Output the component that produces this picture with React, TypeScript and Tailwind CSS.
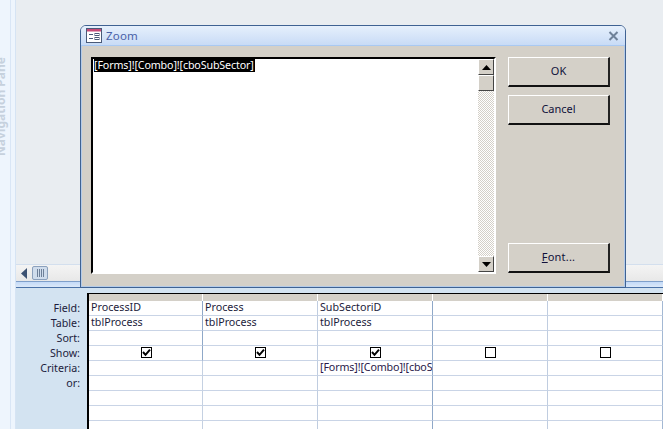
import React from "react";

const labels = ["Field:", "Table:", "Sort:", "Show:", "Criteria:", "or:"];

function Check({ on }: { on: boolean }) {
  return (
    <span className="flex h-[11px] w-[11px] items-center justify-center border border-black bg-white">
      {on && (
        <svg width="9" height="9" viewBox="0 0 9 9">
          <path d="M1 4 L3.5 6.8 L8 1.6" fill="none" stroke="#000" strokeWidth="2" />
        </svg>
      )}
    </span>
  );
}

const cols = [
  { field: "ProcessID", table: "tblProcess", show: true, crit: "", top: "border-r-[#8fa8c8]", low: "border-r-[#c5d1e2]" },
  { field: "Process", table: "tblProcess", show: true, crit: "", top: "border-r-[#c0cde0]", low: "border-r-[#c0cde0]" },
  { field: "SubSectoriD", table: "tblProcess", show: true, crit: "[Forms]![Combo]![cboSubSector]", top: "border-r-[#8fa8c8]", low: "border-r-[#8fa8c8]" },
  { field: "", table: "", show: false, crit: "", top: "border-r-[#c0cde0]", low: "border-r-[#c0cde0]" },
  { field: "", table: "", show: false, crit: "", top: "border-r-[#a3b8d3]", low: "border-r-[#a3b8d3]" },
];

function Cell({ children, center, sep }: { children?: React.ReactNode; center?: boolean; sep: string }) {
  return (
    <div className={`flex h-[15px] items-center overflow-hidden whitespace-nowrap border-b border-r border-b-[#c9d4e6] pb-px pl-[2px] pr-[1px] ${sep} ${center ? "justify-center" : ""}`}>
      {children}
    </div>
  );
}

function Btn({ children }: { children: React.ReactNode }) {
  return (
    <button className="flex h-[30px] w-[102px] items-center justify-center border-b-2 border-l border-r-2 border-t border-t-white border-l-white border-r-[#222] border-b-[#111] bg-[#d4d0c8] text-[11px] text-[#10103a]">
      {children}
    </button>
  );
}

function Arrow({ dir }: { dir: "up" | "down" }) {
  return (
    <div className="flex h-[16px] w-[16px] shrink-0 items-center justify-center border border-t-white border-l-white border-r-[#444] border-b-[#444] bg-[#d4d0c8]">
      <svg width="9" height="5" viewBox="0 0 9 5">
        <path d={dir === "up" ? "M4.5 0 L9 5 L0 5 Z" : "M0 0 L9 0 L4.5 5 Z"} fill="#000" />
      </svg>
    </div>
  );
}

export default function App() {
  return (
    <div className="h-[432px] w-[665px] overflow-hidden bg-white">
      <div
        className="relative flex h-[429px] w-[663px] overflow-hidden text-[10.7px] text-[#1c1c3c]"
        style={{ fontFamily: '"Noto Sans", "Liberation Sans", sans-serif' }}
      >
        {/* Navigation pane */}
        <div className="relative h-full w-[16px] shrink-0 overflow-hidden border-r border-[#d6e4f4] bg-[#eef5fd]">
          <div className="h-full w-[11px] border-r border-[#d9e6f6]" />
          <span
            className="absolute left-[-8px] top-[49px] flex h-[107px] rotate-180 items-center justify-start whitespace-nowrap text-[12px] font-bold text-[#c6d1dd] [writing-mode:vertical-rl]"
          >
            Navigation Pane
          </span>
        </div>

        <div className="flex min-w-0 flex-1 flex-col">
          {/* Upper design area */}
          <div className="h-[264px] shrink-0 bg-[#e9edf1]" />
          {/* Horizontal scroll bar */}
          <div className="flex h-[17px] shrink-0 items-center border-t border-[#d3dfee] bg-gradient-to-b from-[#f4f4f4] to-[#e8e8e8]">
            <svg width="8" height="11" viewBox="0 0 8 11" className="ml-[5px]">
              <path d="M6 0 L6 11 L0 5.5 Z" fill="#3c5273" />
            </svg>
            <div className="ml-[3px] flex h-[14px] w-[16px] items-center justify-center gap-px rounded-[2px] border border-[#8ba0bc] bg-[#cfdcec]">
              <i className="h-[8px] w-px bg-[#6d7f98]" />
              <i className="h-[8px] w-px bg-[#6d7f98]" />
              <i className="h-[8px] w-px bg-[#6d7f98]" />
              <i className="h-[8px] w-px bg-[#6d7f98]" />
            </div>
          </div>
          {/* Splitter */}
          <div className="h-[7px] shrink-0 border-b border-t border-b-[#4a72a8] border-t-[#7f9fca] bg-gradient-to-b from-[#c3daf8] to-[#dbe8f8]" />

          {/* Query grid */}
          <div className="flex min-h-0 flex-1 bg-[#d3e3f1] pt-[5px]">
            <div className="w-[71px] shrink-0 pt-[8px] text-right leading-none">
              {labels.map((l) => (
                <div key={l} className="flex h-[15px] items-center justify-end pb-px pr-[7px]">{l}</div>
              ))}
            </div>
            <div className="flex min-w-0 flex-1 overflow-hidden border-l-2 border-t border-black bg-white">
              {cols.map((c, i) => (
                <div key={i} className={`flex shrink-0 flex-col ${i === 0 ? "w-[114px]" : "w-[115px]"}`}>
                  <div className="h-[7px] shrink-0 border-r border-r-white bg-[#d4d0c8]" />
                  <Cell sep={c.top}>{c.field}</Cell>
                  <Cell sep={c.top}>{c.table}</Cell>
                  <Cell sep={c.top} />
                  <Cell sep={c.top} center><Check on={c.show} /></Cell>
                  <Cell sep={c.low}><span className="tracking-[-0.13px] text-[#2a1a4a]">{c.crit}</span></Cell>
                  <Cell sep={c.low} />
                  <Cell sep={c.low} />
                  <Cell sep={c.low} />
                  <div className={`flex-1 border-r ${c.low}`} />
                </div>
              ))}
            </div>
          </div>
        </div>

        {/* Zoom dialog */}
        <div className="absolute left-[80px] top-[25px] flex h-[263px] w-[546px] flex-col overflow-hidden rounded-t-[6px] border border-[#3f6293]">
          <div className="flex h-[20px] shrink-0 items-center border-b border-[#a9c9f2] bg-gradient-to-b from-[#e6f0fc] to-[#c8dbf6] pl-[5px] pr-[6px]">
            <svg width="16" height="15" viewBox="0 0 16 15" className="shrink-0">
              <rect x="0.5" y="0.5" width="15" height="14" fill="#fff" stroke="#4a5a78" />
              <rect x="1" y="1" width="14" height="2.5" fill="#c64a78" />
              <path d="M3 6.5H7M3 10.5H7" stroke="#4a5a78" />
              <rect x="9" y="5.5" width="4" height="2" fill="none" stroke="#4a5a78" />
              <rect x="9" y="9.5" width="4" height="2" fill="none" stroke="#4a5a78" />
            </svg>
            <span className="ml-[4px] text-[11.5px] tracking-[0.2px] text-[#4a62a8]">Zoom</span>
            <svg width="11" height="10" viewBox="0 0 11 10" className="ml-auto">
              <path d="M1.5 1 L9.5 9 M9.5 1 L1.5 9" stroke="#6f8299" strokeWidth="2" />
            </svg>
          </div>
          <div className="flex flex-1 border-x border-b border-[#b4cbe8] bg-[#d4d0c8] pl-[9px] pr-[14px] pt-[11px]">
            <div className="flex h-[217px] w-[405px] shrink-0 border-2 border-t-black border-l-black border-r-white border-b-white">
              <div className="flex-1 bg-white px-px">
                <div className="flex h-[13px] w-fit items-center bg-black pr-px tracking-[-0.13px] text-white">
                  [Forms]![Combo]![cboSubSector]
                </div>
              </div>
              <div className="flex w-[16px] shrink-0 flex-col bg-[repeating-conic-gradient(#d4d0c8_0_25%,#fff_0_50%)] bg-[length:2px_2px]">
                <Arrow dir="up" />
                <div className="h-[16px] w-[16px] shrink-0 border border-t-white border-l-white border-r-[#444] border-b-[#444] bg-[#d4d0c8]" />
                <div className="flex-1" />
                <Arrow dir="down" />
              </div>
            </div>
            <div className="ml-[12px] flex h-[216px] flex-col">
              <Btn>OK</Btn>
              <div className="mt-[8px]"><Btn>Cancel</Btn></div>
              <div className="mt-auto"><Btn><span className="tracking-[0.2px]"><u>F</u>ont...</span></Btn></div>
            </div>
          </div>
        </div>
      </div>
    </div>
  );
}
